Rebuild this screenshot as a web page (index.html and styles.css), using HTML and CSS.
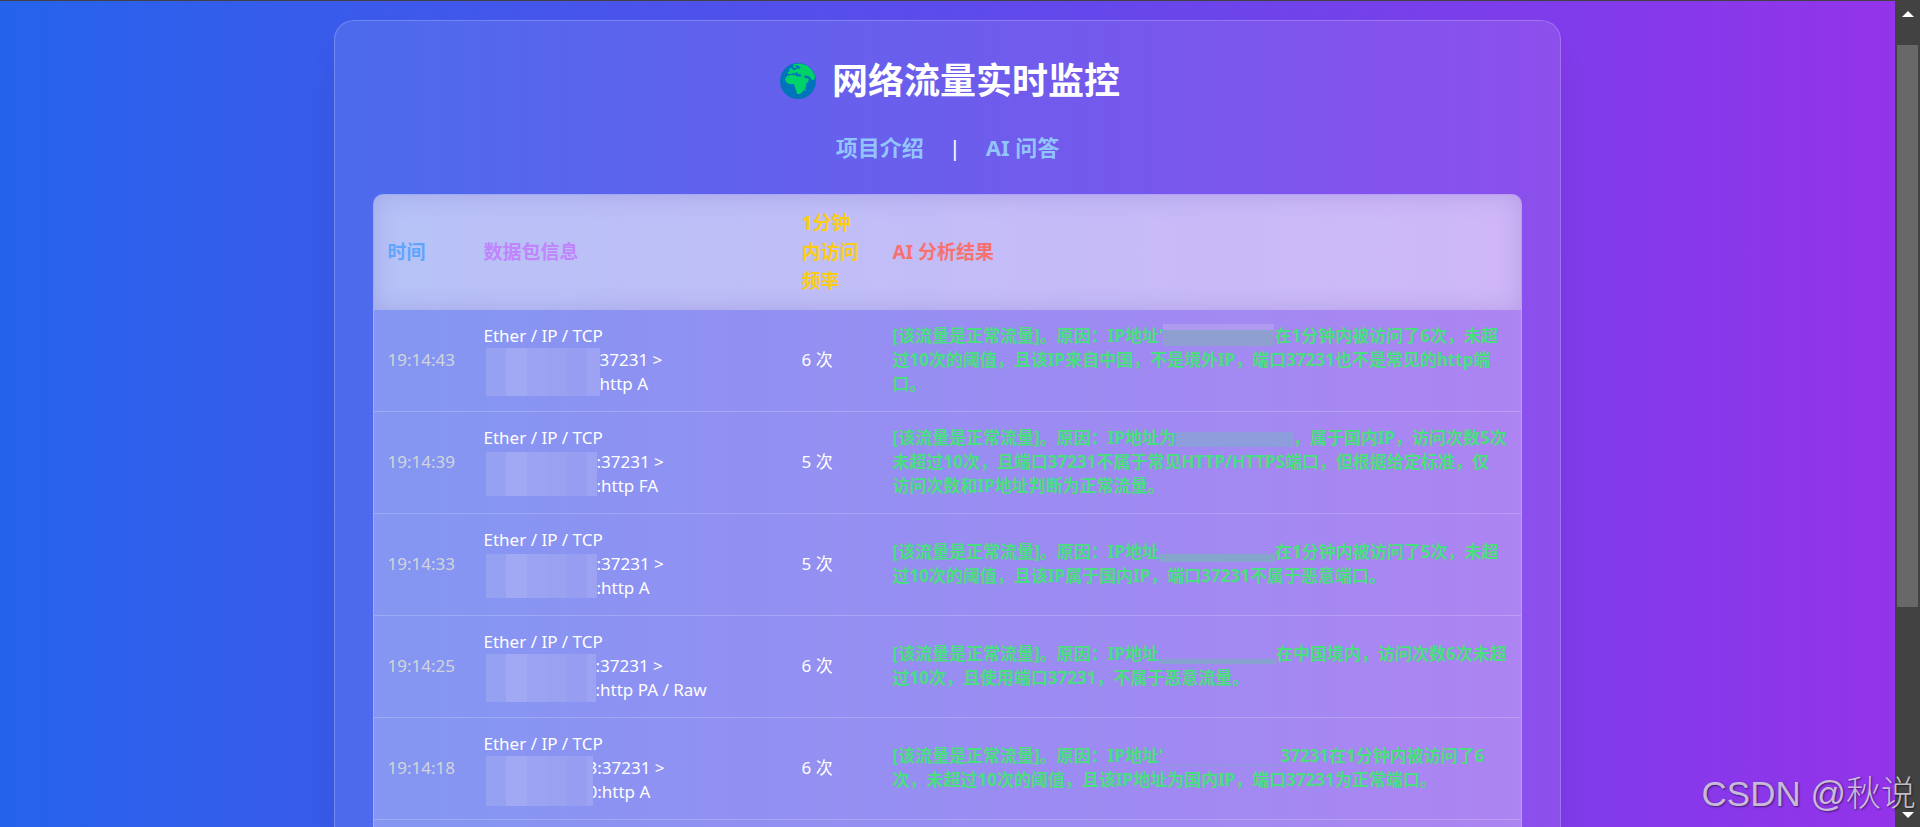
FILE: index.html
```html
<!DOCTYPE html>
<html lang="zh-CN">
<head>
<meta charset="utf-8">
<title>网络流量实时监控</title>
<link rel="stylesheet" href="styles.css">
</head>
<body>
<div class="viewport">
  <main class="page">
    <section class="card">
      <h1 class="title">
        <svg class="globe" viewBox="0 0 36 36" aria-hidden="true">
          <circle cx="18" cy="18" r="18" fill="#0074ba"/>
          <path fill="#00d26a" d="M14 1 L20 .5 L27 2.5 L32 7 L35 13 L34.500 16.500 L32 17 L30 14 L28 13 L25 12.500 L24 14 L26 15.500 L28 15 L29 17 L27 20 L26 21 L26 24 L23 28 L20 31 L17 31 L16 27 L14.500 23 L14 21 L9 21 L6 19 L5 16 L7 13 L11 12 L15 12 L17 13.500 L21 13.500 L21 11.500 L18 11 L17 9 L15 9.500 L16 11 L13 10 L11 11 L8 11 L8 9 L10 8 L9 6 L11 5 L13 7 L16 7 L17 4 L15 5 L13 4 Z"/>
          <path fill="#0074ba" d="M15 2 L18 2.500 L21 5 L18 6 L16 4 Z"/>
          <path fill="#00d26a" d="M25 25 L26 27 L24 28 Z"/>
        </svg>
        <span>网络流量实时监控</span>
      </h1>
      <nav class="links">
        <a href="#intro">项目介绍</a>
        <span class="bar">|</span>
        <a href="#ask">AI 问答</a>
      </nav>
      <div class="panel">
        <table class="log">
          <colgroup><col class="c-time"><col class="c-info"><col class="c-freq"><col></colgroup>
          <thead>
            <tr>
              <th class="h-time">时间</th>
              <th class="h-info">数据包信息</th>
              <th class="h-freq">1分钟<br>内访问<br>频率</th>
              <th class="h-ai">AI 分析结果</th>
            </tr>
          </thead>
          <tbody>
            <tr>
              <td class="time">19:14:43</td>
              <td>Ether / IP / TCP<div class="hosts"><span class="mosaic m1"></span><span>37231 &gt;<br>http A</span></div></td>
              <td>6 次</td>
              <td class="ai">[该流量是正常流量]。原因：IP地址'<span class="mask k1"></span>在1分钟内被访问了6次，未超<br>过10次的阈值，且该IP来自中国，不是境外IP，端口37231也不是常见的http端<br>口。</td>
            </tr>
            <tr>
              <td class="time">19:14:39</td>
              <td>Ether / IP / TCP<div class="hosts"><span class="mosaic m2"></span><span>:37231 &gt;<br>:http FA</span></div></td>
              <td>5 次</td>
              <td class="ai">[该流量是正常流量]。原因：IP地址为<span class="mask k2"></span>，属于国内IP，访问次数5次<br>未超过10次，且端口37231不属于常见HTTP/HTTPS端口，但根据给定标准，仅<br>访问次数和IP地址判断为正常流量。</td>
            </tr>
            <tr>
              <td class="time">19:14:33</td>
              <td>Ether / IP / TCP<div class="hosts"><span class="mosaic m2"></span><span>:37231 &gt;<br>:http A</span></div></td>
              <td>5 次</td>
              <td class="ai">[该流量是正常流量]。原因：IP地址<span class="mask k3"></span>在1分钟内被访问了5次，未超<br>过10次的阈值，且该IP属于国内IP，端口37231不属于恶意端口。</td>
            </tr>
            <tr>
              <td class="time">19:14:25</td>
              <td>Ether / IP / TCP<div class="hosts"><span class="mosaic m4"></span><span>:37231 &gt;<br>:http PA / Raw</span></div></td>
              <td>6 次</td>
              <td class="ai">[该流量是正常流量]。原因：IP地址<span class="mask k4"></span>在中国境内，访问次数6次未超<br>过10次，且使用端口37231，不属于恶意流量。</td>
            </tr>
            <tr>
              <td class="time">19:14:18</td>
              <td>Ether / IP / TCP<div class="hosts"><span class="mosaic m5"></span><span class="tucked">3:37231 &gt;<br>0:http A</span></div></td>
              <td>6 次</td>
              <td class="ai">[该流量是正常流量]。原因：IP地址'<span class="mask k5"></span>37231在1分钟内被访问了6<br>次，未超过10次的阈值，且该IP地址为国内IP，端口37231为正常端口。</td>
            </tr>
          </tbody>
        </table>
      </div>
    </section>
  </main>
  <div class="scroll" aria-hidden="true">
    <svg class="arrow" viewBox="0 0 12 6"><path fill="#fff" d="M6 0 L12 6 H0 Z"/></svg>
    <div class="track"><div class="thumb"></div></div>
    <svg class="arrow" viewBox="0 0 12 6"><path fill="#fff" d="M0 0 H12 L6 6 Z"/></svg>
  </div>
  <div class="watermark">CSDN @秋说</div>
</div>
</body>
</html>
```
FILE: styles.css
```css
* { box-sizing: border-box; }
body {
  margin: 0;
  color: #fff;
  font-family: "Noto Sans", "Noto Sans CJK SC", sans-serif;
}
.viewport {
  position: relative;
  display: flex;
  height: 100vh;
  overflow: hidden;
  border-top: 1px solid #424242;
}
.page {
  flex: 1;
  display: flex;
  justify-content: center;
  padding-top: 19px;
  background: linear-gradient(to right, #2563eb, #9333ea);
}
.card {
  display: flex;
  flex-direction: column;
  width: 64.8%;
  padding: 38px 38px 0;
  background: rgba(255, 255, 255, 0.1);
  border: 1px solid rgba(255, 255, 255, 0.2);
  border-bottom: 0;
  border-radius: 20px 20px 0 0;
  box-shadow: 0 30px 38px -12px rgba(0, 0, 0, 0.15);
}
.title {
  display: flex;
  align-items: center;
  justify-content: center;
  gap: 16px;
  margin: 0;
  padding-left: 5px;
  font-size: 36px;
  line-height: 44px;
  font-weight: 700;
}
.globe { width: 36px; height: 36px; }
.links {
  display: flex;
  justify-content: center;
  gap: 25px;
  margin: 27px 0 30px;
  font-size: 22px;
  line-height: 34px;
  font-weight: 700;
}
.links a { color: #93c5fd; text-decoration: none; }
.bar { font-weight: 400; }
.panel {
  flex: 1;
  overflow: hidden;
  background: rgba(255, 255, 255, 0.3);
  border: 1px solid rgba(255, 255, 255, 0.2);
  border-bottom: 0;
  border-radius: 10px 10px 0 0;
}
.log {
  width: 100%;
  table-layout: fixed;
  border-collapse: collapse;
  font-size: 17px;
  line-height: 24px;
}
.c-time { width: 96px; }
.c-info { width: 318px; }
.c-freq { width: 91px; }
.log thead {
  background: rgba(255, 255, 255, 0.42);
  box-shadow: inset 0 0 24px rgba(80, 60, 180, 0.2);
}
.log th {
  padding: 14px;
  font-size: 19px;
  line-height: 29px;
  font-weight: 700;
  text-align: left;
  white-space: nowrap;
}
.h-time { color: #60a5fa; }
.h-info { color: #c084fc; }
.h-freq { color: #facc15; }
.h-ai { color: #f87171; }
.log td {
  padding: 14px 14px 15px;
  border-bottom: 1px solid rgba(255, 255, 255, 0.2);
  white-space: nowrap;
}
.log .time { color: #d1d5db; }
.log .ai {
  color: #4ade80;
  font-weight: 700;
}
.hosts { display: flex; height: 48px; }
.mosaic {
  z-index: 1;
  flex: none;
  width: 111px;
  height: 44px;
  margin: 2px 0 0 2px;
  background: linear-gradient(to right, #97a1f1 20px, #a1a9f4 20px 41px, #9ba3f2 41px 61px, #9aa1f1 61px 81px, #979df0 81px 101px, #9da3f2 101px);
}
.m1 { width: 114px; height: 48px; margin-top: 0; }
.m4 { width: 110px; height: 48px; margin-top: 0; }
.m5 { width: 107px; height: 50px; margin-top: 0; }
.tucked { margin-left: -5px; }
.mask {
  display: inline-block;
  width: 111px;
  height: 22px;
  vertical-align: top;
}
.k1 { background: linear-gradient(#ae9bf0 6px, #8fa0d0 6px); }
.k2 { width: 117px; background: linear-gradient(transparent 6px, #8e9ddb 6px 21px, transparent 21px); }
.k3 { width: 116px; background: linear-gradient(transparent 14px, #86a6cb 14px); }
.k4 { width: 117px; background: linear-gradient(transparent 17px, #88a2d0 17px); }
.k5 { width: 117px; background: linear-gradient(transparent 20px, #9592e3 20px); }
.scroll {
  display: flex;
  flex-direction: column;
  align-items: center;
  width: 25px;
  padding: 10px 0 9px;
  background: #424242;
}
.arrow { width: 12px; height: 6px; }
.track { flex: 1; padding: 28px 0; }
.thumb { width: 21px; height: 76%; background: #686868; }
.watermark {
  position: absolute;
  right: 4px;
  bottom: 6px;
  color: rgba(220, 214, 228, 0.85);
  font-family: "Liberation Sans", "Noto Sans CJK SC", sans-serif;
  font-size: 35px;
  font-weight: 300;
  line-height: 54px;
  text-shadow: 1px 1px 2px rgba(0, 0, 0, 0.5);
}
```
